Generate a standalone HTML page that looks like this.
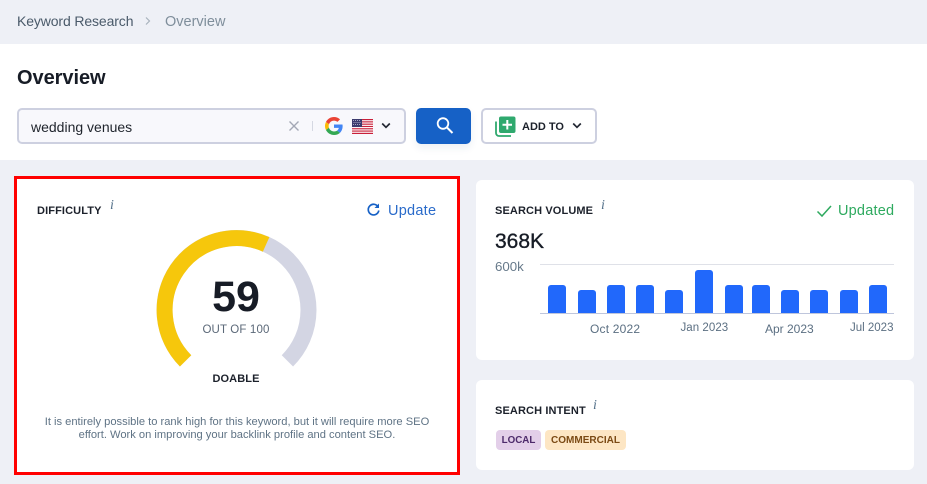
<!DOCTYPE html>
<html><head><meta charset="utf-8">
<style>
html,body{margin:0;padding:0;width:927px;height:484px;overflow:hidden;background:#eef0f6}
body{position:relative;font-family:"Liberation Sans",sans-serif;color:#171c26}
.a{position:absolute;white-space:nowrap;line-height:1}
.box{position:absolute;box-sizing:border-box}
.card{position:absolute;background:#fff;border-radius:6px}
.bar{position:absolute;width:18px;background:#2168fb;border-radius:3px 3px 0 0}
.h{font-size:11px;font-weight:700;letter-spacing:.12px;color:#1c212b}
.i{font-family:"Liberation Serif",serif;font-style:italic;font-size:14px;color:#54718a}
.m{font-size:12px;color:#5b6f82}
</style></head>
<body>
<div class="box" style="left:0;top:44px;width:927px;height:116px;background:#fff"></div>
<div class="a" style="left:17px;top:14px;font-size:14px;letter-spacing:-.12px;color:#4a5a6a">Keyword Research</div>
<svg class="a" style="left:144px;top:16px" width="8" height="10"><path d="M2 1.500L5.500 5L2 8.500" fill="none" stroke="#a8b2bc" stroke-width="1.200"/></svg>
<div class="a" style="left:165px;top:15px;font-size:14.500px;color:#7f8e9b">Overview</div>
<div class="a" style="left:17px;top:68px;font-size:20px;font-weight:700;letter-spacing:-.05px;color:#171c26">Overview</div>

<div class="box" style="left:17px;top:108px;width:389px;height:36px;background:#f8f8fc;border:2px solid #cdd0e0;border-radius:5px"></div>
<div class="a" style="left:31px;top:120px;font-size:14px;color:#1f242c">wedding venues</div>
<svg class="a" style="left:288px;top:120px" width="12" height="12"><path d="M1.500 1.500L10.500 10.500M10.500 1.500L1.500 10.500" stroke="#a4a8b6" stroke-width="1.400" fill="none"/></svg>
<div class="box" style="left:312px;top:121px;width:1px;height:10px;background:#d5d8e2"></div>
<svg class="a" style="left:325px;top:117px" width="18" height="18" viewBox="0 0 48 48">
<path fill="#EA4335" d="M24 9.500c3.500 0 6.700 1.200 9.200 3.600l6.900-6.900C35.900 2.400 30.500 0 24 0 14.600 0 6.500 5.400 2.600 13.200l8 6.200C12.400 13.700 17.700 9.500 24 9.500z"/>
<path fill="#4285F4" d="M47 24.500c0-1.600-.1-3.100-.4-4.500H24v9h12.900c-.6 3-2.200 5.500-4.700 7.200l7.700 6C44.400 37.900 47 31.800 47 24.500z"/>
<path fill="#FBBC05" d="M10.500 28.600c-.5-1.400-.8-3-.8-4.600s.3-3.200.8-4.600l-8-6.200C.9 16.500 0 20.100 0 24s.9 7.500 2.600 10.800l7.900-6.200z"/>
<path fill="#34A853" d="M24 48c6.500 0 11.900-2.100 15.900-5.800l-7.700-6c-2.200 1.500-4.900 2.300-8.200 2.300-6.300 0-11.600-4.200-13.500-9.900l-8 6.200C6.500 42.600 14.600 48 24 48z"/>
</svg>
<svg class="a" style="left:352px;top:119px" width="21" height="15" viewBox="0 0 21 15">
<rect width="21" height="15" fill="#fff"/>
<g fill="#c8203a"><rect y="0" width="21" height="1.200"/><rect y="2.300" width="21" height="1.150"/><rect y="4.600" width="21" height="1.150"/><rect y="6.900" width="21" height="1.150"/><rect y="9.200" width="21" height="1.150"/><rect y="11.500" width="21" height="1.150"/><rect y="13.800" width="21" height="1.200"/></g>
<rect width="10" height="8" fill="#3c3b6e"/>
<path d="M1 1.500h8M1.500 3.500h7M1 5.500h8" stroke="#c9cbe0" stroke-width=".8" stroke-dasharray="1 1"/>
</svg>
<svg class="a" style="left:381px;top:122px" width="10" height="8"><path d="M1.200 1.500L5 5.300L8.800 1.500" fill="none" stroke="#232833" stroke-width="1.700"/></svg>

<div class="box" style="left:416px;top:108px;width:55px;height:36px;background:#1661c6;border-radius:5px;box-shadow:0 4px 8px rgba(30,60,120,.08)"></div>
<svg class="a" style="left:435px;top:116px" width="20" height="20"><circle cx="8" cy="7.500" r="5.300" fill="none" stroke="#fff" stroke-width="1.800"/><path d="M12 11.500L17.500 17" stroke="#fff" stroke-width="2" fill="none"/></svg>

<div class="box" style="left:481px;top:108px;width:116px;height:36px;background:#fff;border:2px solid #cdd0e0;border-radius:5px"></div>
<svg class="a" style="left:495px;top:116px" width="21" height="21"><path d="M1 5.500V17a3 3 0 0 0 3 3h12" fill="none" stroke="#2fa96e" stroke-width="1.800"/><rect x="4" y="0.500" width="16.500" height="16.500" rx="2" fill="#2fa96e"/><path d="M12.300 4v9.500M7.500 8.800H17" stroke="#fff" stroke-width="2" fill="none"/></svg>
<div class="a" style="left:522px;top:122px;font-size:11px;font-weight:700;color:#1c212b">ADD TO</div>
<svg class="a" style="left:572px;top:122px" width="10" height="8"><path d="M1.200 1.500L5 5.300L8.800 1.500" fill="none" stroke="#232833" stroke-width="1.700"/></svg>

<div class="box" style="left:14px;top:176px;width:446px;height:299px;background:#fff;border:3px solid #ff0000"></div>
<div class="a h" style="left:37px;top:206px">DIFFICULTY</div>
<div class="a i" style="left:110px;top:199px">i</div>
<svg class="a" style="left:366px;top:202px" width="15" height="15" viewBox="0 0 15 15"><path d="M12.200 5A5.300 5.300 0 1 0 12.800 8.500" fill="none" stroke="#1661c6" stroke-width="1.700"/><path d="M13 1.500V6H8.500z" fill="#1661c6"/></svg>
<div class="a" style="left:388px;top:204px;font-size:14.500px;letter-spacing:.25px;color:#2a6bca">Update</div>

<svg class="a" style="left:140px;top:220px" width="200" height="160" viewBox="140 220 200 160">
<path d="M185.600 360.900A72 72 0 1 1 287.400 360.900" fill="none" stroke="#d3d5e3" stroke-width="16"/>
<path d="M185.600 360.900A72 72 0 0 1 266.100 244.400" fill="none" stroke="#f6c70c" stroke-width="16"/>
</svg>
<div class="a" style="left:186px;width:100px;text-align:center;top:276px;font-size:43px;font-weight:700;color:#171c26">59</div>
<div class="a" style="left:176px;width:120px;text-align:center;top:325px;font-size:11.500px;letter-spacing:.15px;color:#5b6878">OUT OF 100</div>
<div class="a" style="left:176px;width:120px;text-align:center;top:374px;font-size:11px;font-weight:700;letter-spacing:.1px;color:#1c212b">DOABLE</div>
<div class="a" style="left:17px;width:440px;text-align:center;top:416px;font-size:11.150px;line-height:13px;color:#5f7385;white-space:normal">It is entirely possible to rank high for this keyword, but it will require more SEO<br>effort. Work on improving your backlink profile and content SEO.</div>

<div class="card" style="left:476px;top:180px;width:438px;height:180px"></div>
<div class="a h" style="left:495px;top:206px">SEARCH VOLUME</div>
<div class="a i" style="left:601px;top:199px">i</div>
<svg class="a" style="left:816px;top:204px" width="16" height="14"><path d="M1.500 7.500L6 12L15 2" fill="none" stroke="#2eaa5f" stroke-width="1.500"/></svg>
<div class="a" style="left:838px;top:204px;font-size:14.500px;letter-spacing:.2px;color:#2eaa5f">Updated</div>
<div class="a" style="left:495px;top:231px;font-size:21px;font-weight:400;color:#171c26;-webkit-text-stroke:.35px #171c26">368K</div>
<div class="a m" style="left:495px;top:260px;color:#66798a;font-size:13.300px">600k</div>
<div class="box" style="left:540px;top:264px;width:354px;height:1px;background:#dfe1e8"></div>
<div class="box" style="left:540px;top:313px;width:354px;height:1px;background:#bfc6dc"></div>
<div class="bar" style="left:548px;top:285px;height:28px"></div>
<div class="bar" style="left:578px;top:290px;height:23px"></div>
<div class="bar" style="left:607px;top:285px;height:28px"></div>
<div class="bar" style="left:636px;top:285px;height:28px"></div>
<div class="bar" style="left:665px;top:290px;height:23px"></div>
<div class="bar" style="left:695px;top:270px;height:43px"></div>
<div class="bar" style="left:725px;top:285px;height:28px"></div>
<div class="bar" style="left:752px;top:285px;height:28px"></div>
<div class="bar" style="left:781px;top:290px;height:23px"></div>
<div class="bar" style="left:810px;top:290px;height:23px"></div>
<div class="bar" style="left:840px;top:290px;height:23px"></div>
<div class="bar" style="left:869px;top:285px;height:28px"></div>
<div class="a m" style="left:590px;top:323px;letter-spacing:.2px">Oct 2022</div>
<div class="a m" style="left:680.500px;top:323px;font-size:11.500px;letter-spacing:.05px">Jan 2023</div>
<div class="a m" style="left:765px;top:323px">Apr 2023</div>
<div class="a m" style="left:850px;top:323px;font-size:11.500px">Jul 2023</div>

<div class="card" style="left:476px;top:380px;width:438px;height:90px"></div>
<div class="a h" style="left:495px;top:406px">SEARCH INTENT</div>
<div class="a i" style="left:593px;top:399px">i</div>
<div class="box" style="left:496px;top:430px;width:45px;height:20px;background:#e3cfe9;border-radius:4px"></div>
<div class="a" style="left:496px;width:45px;text-align:center;top:435.500px;font-size:9.800px;font-weight:700;color:#4d2a6b">LOCAL</div>
<div class="box" style="left:545px;top:430px;width:81px;height:20px;background:#fde6c4;border-radius:4px"></div>
<div class="a" style="left:545px;width:81px;text-align:center;top:435.500px;font-size:10px;font-weight:700;color:#7b4a14">COMMERCIAL</div>
</body></html>
